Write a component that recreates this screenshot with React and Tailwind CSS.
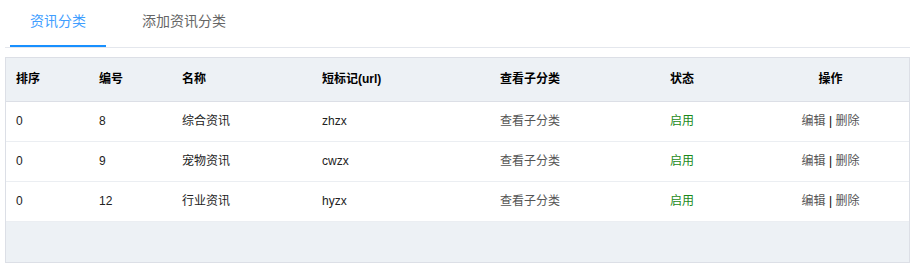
const rows = [
  { sort: 0, id: 8, name: "综合资讯", slug: "zhzx" },
  { sort: 0, id: 9, name: "宠物资讯", slug: "cwzx" },
  { sort: 0, id: 12, name: "行业资讯", slug: "hyzx" },
];

const App = () => {
  return (
    <div
      className="w-[913px] h-[267px] bg-white text-[12px] text-[#222]"
      style={{ fontFamily: '"Liberation Sans", Arial, "Noto Sans CJK SC", sans-serif' }}
    >
      {/* tabs */}
      <div className="ml-[5px] w-[905px] h-[48px] border-b border-[#e4e7ed] flex pl-[5px] gap-[16px]">
        <div className="h-[47px] px-[20px] flex items-start pt-[11px] border-b-2 border-[#1890ff] text-[14px] text-[#409eff]">
          资讯分类
        </div>
        <div className="h-[47px] px-[20px] flex items-start pt-[11px] text-[14px] text-[#666]">
          添加资讯分类
        </div>
      </div>

      {/* table */}
      <div className="ml-[5px] mt-[9px] w-[905px] border border-[#dcdfe6]">
        <table className="w-full table-fixed border-collapse">
          <colgroup>
            <col className="w-[83px]" />
            <col className="w-[83px]" />
            <col className="w-[140px]" />
            <col className="w-[178px]" />
            <col className="w-[170px]" />
            <col className="w-[92px]" />
            <col />
          </colgroup>
          <thead>
            <tr className="h-[43px] bg-[#edf1f5] border-b border-[#dcdfe6] font-bold text-black">
              <th className="px-[10px] text-left">排序</th>
              <th className="px-[10px] text-left">编号</th>
              <th className="px-[10px] text-left">名称</th>
              <th className="px-[10px] text-left">短标记(url)</th>
              <th className="px-[10px] text-left">查看子分类</th>
              <th className="px-[10px] text-left">状态</th>
              <th className="px-[10px] text-center">操作</th>
            </tr>
          </thead>
          <tbody>
            {rows.map((r) => (
              <tr key={r.id} className="h-[40px] border-b border-[#ebeef2]">
                <td className="px-[10px]">{r.sort}</td>
                <td className="px-[10px]">{r.id}</td>
                <td className="px-[10px]">{r.name}</td>
                <td className="px-[10px]">{r.slug}</td>
                <td className="px-[10px] text-[#555]">查看子分类</td>
                <td className="px-[10px] text-[#1a8a1a]">启用</td>
                <td className="px-[10px] text-center">
                  <span className="text-[#555]">编辑</span>
                  <span className="text-black"> | </span>
                  <span className="text-[#555]">删除</span>
                </td>
              </tr>
            ))}
          </tbody>
        </table>
        <div className="h-[40px] bg-[#edf1f5]" />
      </div>
    </div>
  );
};

export default App;
